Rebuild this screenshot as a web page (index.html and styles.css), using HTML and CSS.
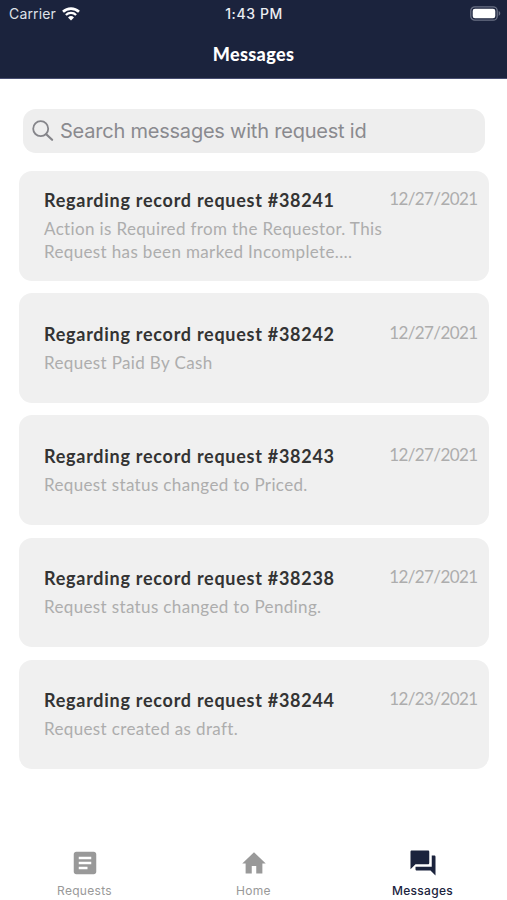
FILE: index.html
```html
<!DOCTYPE html>
<html lang="en">
<head>
<meta charset="UTF-8">
<meta name="viewport" content="width=device-width, initial-scale=1.0">
<title>Messages</title>
<link rel="stylesheet" href="styles.css">
</head>
<body>
<header>
    <div class="status-bar">
        <div class="carrier">
            <span>Carrier</span>
            <svg class="wifi" viewBox="0 0 18 14" width="18" height="14">
                <path d="M1 4.8a11.6 11.6 0 0 1 16 0" fill="none" stroke="#fff" stroke-width="2.6"/>
                <path d="M3.9 8a7.3 7.3 0 0 1 10.2 0" fill="none" stroke="#fff" stroke-width="2.3"/>
                <path d="M9 13.6l-3-3.1a4.3 4.3 0 0 1 6 0z" fill="#fff"/>
            </svg>
        </div>
        <span class="time">1:43 PM</span>
        <svg class="battery" viewBox="0 0 31 15" width="31" height="15">
            <rect x="0.8" y="0.8" width="26.4" height="13.4" rx="4" fill="none" stroke="#6b7185" stroke-width="1.3"/>
            <rect x="2.7" y="2.7" width="22.6" height="9.6" rx="2.3" fill="#fff"/>
            <path d="M28.7 5.1c2.1.9 2.1 3.9 0 4.8z" fill="#6b7185"/>
        </svg>
    </div>
    <h1>Messages</h1>
</header>

<main>
    <div class="search">
        <svg viewBox="0 0 22 22" width="22" height="22">
            <circle cx="8.7" cy="8.7" r="7.5" fill="none" stroke="#85858a" stroke-width="1.8"/>
            <path d="M14.2 14.2l5.9 5.6" stroke="#85858a" stroke-width="2.2" stroke-linecap="round"/>
        </svg>
        <span>Search messages with request id</span>
    </div>

    <section class="messages">
        <article class="card">
            <div class="card-text">
                <h2>Regarding record request #38241</h2>
                <p>Action is Required from the Requestor. This<br>Request has been marked Incomplete.…</p>
            </div>
            <time>12/27/2021</time>
        </article>
        <article class="card">
            <div class="card-text">
                <h2>Regarding record request #38242</h2>
                <p>Request Paid By Cash</p>
            </div>
            <time>12/27/2021</time>
        </article>
        <article class="card">
            <div class="card-text">
                <h2>Regarding record request #38243</h2>
                <p>Request status changed to Priced.</p>
            </div>
            <time>12/27/2021</time>
        </article>
        <article class="card">
            <div class="card-text">
                <h2>Regarding record request #38238</h2>
                <p>Request status changed to Pending.</p>
            </div>
            <time>12/27/2021</time>
        </article>
        <article class="card">
            <div class="card-text">
                <h2>Regarding record request #38244</h2>
                <p>Request created as draft.</p>
            </div>
            <time>12/23/2021</time>
        </article>
    </section>
</main>

<nav>
    <a class="tab">
        <svg viewBox="0 0 24 24" width="30" height="30">
            <path d="M19 3H5c-1.1 0-2 .9-2 2v14c0 1.1.9 2 2 2h14c1.1 0 2-.9 2-2V5c0-1.1-.9-2-2-2zm-5 14H7v-2h7v2zm3-4H7v-2h10v2zm0-4H7V7h10v2z"/>
        </svg>
        <span>Requests</span>
    </a>
    <a class="tab">
        <svg viewBox="0 0 24 24" width="30" height="30">
            <path d="M10.2 20.4v-6h3.6v6h4.9v-8h2.7L12 3.4 2.6 12.4h2.7v8z"/>
        </svg>
        <span>Home</span>
    </a>
    <a class="tab active">
        <svg viewBox="0 0 24 24" width="30" height="30">
            <path d="M21 6h-2v9H6v2c0 .55.45 1 1 1h11l4 4V7c0-.55-.45-1-1-1zm-4 6V3c0-.55-.45-1-1-1H3c-.55 0-1 .45-1 1v14l4-4h10c.55 0 1-.45 1-1z"/>
        </svg>
        <span>Messages</span>
    </a>
</nav>
</body>
</html>
```
FILE: styles.css
```css
* {
    box-sizing: border-box;
}
body {
    font-family: Lato, sans-serif;
    margin: 0;
    height: 100vh;
    display: flex;
    flex-direction: column;
    background: #fff;
    overflow: hidden;
}
header {
    height: 79px;
    background: #1b233d;
    color: #fff;
    border-bottom: 1px solid #474d70;
}
.status-bar {
    display: grid;
    grid-template-columns: 1fr auto 1fr;
    align-items: center;
    height: 27px;
    padding: 0 6px 0 9px;
    font-family: Inter, sans-serif;
    font-size: 14px;
}
.carrier {
    display: flex;
    align-items: center;
    gap: 6px;
    color: #dfe1e8;
    letter-spacing: 0.15px;
}
.time {
    font-weight: 500;
    color: #eceef2;
    letter-spacing: 0.6px;
    margin-right: 2px;
}
.battery {
    justify-self: end;
}
h1 {
    margin: 0;
    font-size: 18px;
    font-weight: 900;
    line-height: 54px;
    letter-spacing: 0.35px;
    text-align: center;
}
main {
    flex: 1;
    padding: 30px 18.5px 0 19px;
}
.search {
    display: flex;
    align-items: center;
    gap: 6px;
    height: 44px;
    margin: 0 4px 18px;
    padding-left: 9px;
    border-radius: 13px;
    background: #eee;
    color: #8a8a8f;
    font-family: Inter, sans-serif;
    font-size: 20px;
    letter-spacing: -0.22px;
}
.messages {
    display: flex;
    flex-direction: column;
    gap: 12.7px;
}
.card {
    display: flex;
    justify-content: space-between;
    align-items: center;
    height: 109.5px;
    padding: 0 11px 0 25px;
    border-radius: 13px;
    background: #f0f0f0;
}
.card-text {
    padding-bottom: 1.5px;
}
h2 {
    margin: 0 0 3px;
    font-size: 18px;
    font-weight: 700;
    line-height: 27px;
    letter-spacing: 0.73px;
    color: #333;
    white-space: nowrap;
}
.card p {
    margin: 0;
    font-size: 17px;
    line-height: 23px;
    letter-spacing: 0.36px;
    color: #adadad;
    white-space: nowrap;
}
time {
    align-self: flex-start;
    margin-top: 27.5px;
    font-size: 17px;
    line-height: 24px;
    letter-spacing: -0.6px;
    color: #adadad;
}
.card:first-child time {
    margin-top: 16px;
}
nav {
    display: flex;
    height: 55px;
}
.tab {
    flex: 1;
    display: flex;
    flex-direction: column;
    align-items: center;
    gap: 5px;
    padding-top: 3px;
    font-family: Inter, sans-serif;
    font-size: 12px;
    line-height: 16px;
    letter-spacing: 0.3px;
    color: #999;
}
.tab svg {
    fill: currentColor;
}
.active {
    color: #1b233d;
    font-weight: 500;
}
```
